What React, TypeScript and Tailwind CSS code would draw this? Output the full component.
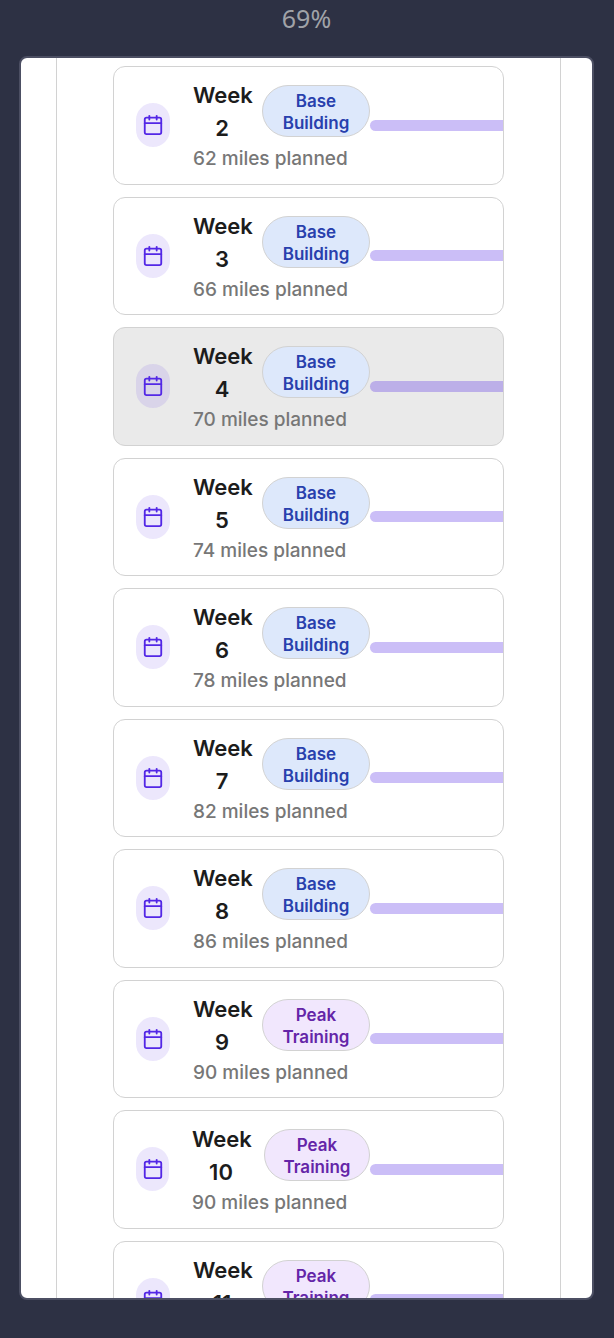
import { Calendar } from "lucide-react";

type Phase = "Base Building" | "Peak Training";

interface Week {
  number: number;
  miles: number;
  phase: Phase;
  active?: boolean;
  wideLabel?: boolean;
}

const pairs: Week[][] = [
  [
    { number: 2, miles: 62, phase: "Base Building" },
    { number: 3, miles: 66, phase: "Base Building" },
  ],
  [
    { number: 4, miles: 70, phase: "Base Building", active: true },
    { number: 5, miles: 74, phase: "Base Building" },
  ],
  [
    { number: 6, miles: 78, phase: "Base Building" },
    { number: 7, miles: 82, phase: "Base Building" },
  ],
  [
    { number: 8, miles: 86, phase: "Base Building" },
    { number: 9, miles: 90, phase: "Peak Training" },
  ],
  [
    { number: 10, miles: 90, phase: "Peak Training", wideLabel: true },
    { number: 11, miles: 90, phase: "Peak Training" },
  ],
];

const phaseStyles: Record<Phase, string> = {
  "Base Building": "bg-[#dde8fb] text-[#2840ad]",
  "Peak Training": "bg-[#f1e7fd] text-[#6425a8]",
};

function WeekCard({ week }: { week: Week }) {
  return (
    <button
      type="button"
      className={`flex w-full items-center overflow-hidden rounded-xl border border-[#d2d2d2] pl-[22px] text-left ${
        week.active ? "bg-[#eaeaea]" : "bg-white"
      }`}
    >
      <span
        className={`mr-[23px] flex h-11 shrink-0 items-center justify-center rounded-full bg-[#5327e6]/11 ${
          week.wideLabel ? "w-[33px]" : "w-[34px]"
        }`}
      >
        <Calendar className="size-[22px] text-[#5327e6]" strokeWidth={2} />
      </span>
      <span className={`flex shrink-0 flex-col ${week.wideLabel ? "w-[178px]" : "w-[177px]"}`}>
        <span className="flex items-center justify-between">
          <span className="w-[58px] pt-0.5 text-center text-[22px] leading-[33px] font-semibold text-[#1c1c1c]">
            Week {week.number}
          </span>
          <span
            className={`rounded-full border border-[#d2d2d2] pt-1 pb-0.5 text-center text-[17px] leading-[22px] font-semibold ${
              week.wideLabel ? "w-[106px] px-[15px]" : "w-[108px] px-4"
            } ${phaseStyles[week.phase]}`}
          >
            {week.phase}
          </span>
        </span>
        <span className="text-[19px] leading-7 font-medium text-[#777777]">
          {week.miles} miles planned
        </span>
      </span>
      <span className="h-[11px] grow rounded-l-full bg-[#5327e6]/30" />
    </button>
  );
}

export default function App() {
  return (
    <div className="flex h-screen flex-col bg-[#2d3144] pr-5 pb-[38px] pl-[19px] font-['Inter',sans-serif]">
      <header className="flex h-14 shrink-0 justify-center pt-0.5 font-['Noto_Sans',sans-serif] text-[25px] leading-8 text-[#a0a3a8]">
        69%
      </header>
      <main className="min-h-0 grow overflow-hidden rounded-lg border-2 border-[#4c4f63] bg-white pr-[31px] pl-[35px]">
        <div className="flex min-h-full flex-col gap-3 border-x border-[#d2d2d2] px-14 pt-2">
          {pairs.map((pair) => (
            <div key={pair[0].number} className="grid h-[249px] shrink-0 grid-rows-2 gap-3">
              {pair.map((week) => (
                <WeekCard key={week.number} week={week} />
              ))}
            </div>
          ))}
        </div>
      </main>
    </div>
  );
}
